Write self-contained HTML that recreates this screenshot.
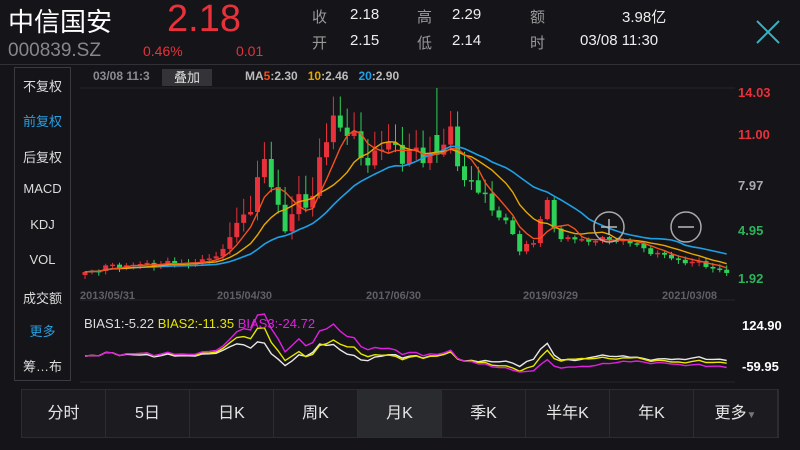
<!DOCTYPE html>
<html><head><meta charset="utf-8">
<style>
*{margin:0;padding:0;box-sizing:border-box}
body{width:800px;height:450px;background:#141419;overflow:hidden;position:relative;font-family:"Liberation Sans","Noto Sans CJK SC",sans-serif;color:#eee}
.a{position:absolute;white-space:nowrap}
.side{position:absolute;left:14px;top:67px;width:57px;height:314px;border:1px solid #3a3a40}
.side div{position:absolute;left:0;width:55px;text-align:center;font-size:13px;color:#ddd}
.tabs{position:absolute;left:21px;top:389px;width:758px;height:49px;display:flex;border:1px solid #2c2c31}
.tabs div{flex:1;border-right:1px solid #2c2c31;text-align:center;line-height:47px;font-size:16px;color:#e6e6e6;background:#1b1b20}
.tabs div.on{background:#2a2b2f}
.yl{position:absolute;left:738px;font-size:13px;font-weight:bold}
.dl{position:absolute;top:290px;font-size:11px;font-weight:bold;color:#5f6066}
</style></head><body>
<div class="a" style="left:8px;top:2px;font-size:26px;color:#fff">中信国安</div>
<div class="a" style="left:167px;top:-2px;font-size:38px;color:#e8313a">2.18</div>
<div class="a" style="left:8px;top:40px;font-size:19px;color:#86868c">000839.SZ</div>
<div class="a" style="left:143px;top:43px;font-size:14px;color:#e8313a">0.46%</div>
<div class="a" style="left:236px;top:43px;font-size:14px;color:#e8313a">0.01</div>
<div class="a" style="left:312px;top:6px;font-size:15px;color:#999">收</div>
<div class="a" style="left:312px;top:32px;font-size:15px;color:#999">开</div>
<div class="a" style="left:350px;top:6px;font-size:15px">2.18</div>
<div class="a" style="left:350px;top:32px;font-size:15px">2.15</div>
<div class="a" style="left:417px;top:6px;font-size:15px;color:#999">高</div>
<div class="a" style="left:417px;top:32px;font-size:15px;color:#999">低</div>
<div class="a" style="left:452px;top:6px;font-size:15px">2.29</div>
<div class="a" style="left:452px;top:32px;font-size:15px">2.14</div>
<div class="a" style="left:530px;top:6px;font-size:15px;color:#999">额</div>
<div class="a" style="left:530px;top:32px;font-size:15px;color:#999">时</div>
<div class="a" style="left:622px;top:6px;font-size:15px">3.98亿</div>
<div class="a" style="left:580px;top:32px;font-size:15px">03/08 11:30</div>
<svg class="a" style="left:755px;top:19px" width="26" height="26"><path d="M2 2L24 24M24 2L2 24" stroke="#3ab0c0" stroke-width="2"/></svg>
<div class="a" style="left:0;top:64px;width:800px;height:1px;background:#303036"></div>

<div class="side">
<div style="top:8px">不复权</div>
<div style="top:43px;color:#2a9fe0">前复权</div>
<div style="top:79px">后复权</div>
<div style="top:113px">MACD</div>
<div style="top:149px">KDJ</div>
<div style="top:184px">VOL</div>
<div style="top:220px">成交额</div>
<div style="top:253px;color:#2a9fe0">更多</div>
<div style="top:288px">筹…布</div>
</div>

<div class="a" style="left:93px;top:69px;font-size:12px;font-weight:bold;color:#8a8a90">03/08 11:3</div>
<div class="a" style="left:162px;top:69px;width:50px;height:17px;background:#343438;font-size:13px;text-align:center;line-height:17px;color:#ddd">叠加</div>
<div class="a" style="left:245px;top:69px;font-size:12px;font-weight:bold;color:#bbb">MA<span style="color:#f5501e">5</span>:2.30 &nbsp; <span style="color:#e0a800">10</span>:2.46 &nbsp; <span style="color:#1ea0e6">20</span>:2.90</div>

<div class="yl" style="top:85px;color:#e8313a">14.03</div>
<div class="yl" style="top:127px;color:#e8313a">11.00</div>
<div class="yl" style="top:178px;color:#aaa">7.97</div>
<div class="yl" style="top:223px;color:#2db35a">4.95</div>
<div class="yl" style="top:271px;color:#2db35a">1.92</div>
<div class="dl" style="left:80px">2013/05/31</div>
<div class="dl" style="left:217px">2015/04/30</div>
<div class="dl" style="left:366px">2017/06/30</div>
<div class="dl" style="left:523px">2019/03/29</div>
<div class="dl" style="left:662px">2021/03/08</div>

<svg id="ch" class="a" style="left:0;top:0" width="800" height="390"></svg>

<div class="a" style="left:84px;top:316px;font-size:13px;color:#ddd">BIAS1:-5.22 <span style="color:#e6e600">BIAS2:-11.35</span> <span style="color:#e020e0">BIAS3:-24.72</span></div>
<div class="a" style="left:742px;top:318px;font-size:13px;font-weight:bold;color:#fff">124.90</div>
<div class="a" style="left:742px;top:359px;font-size:13px;font-weight:bold;color:#fff">-59.95</div>

<div class="tabs">
<div>分时</div><div>5日</div><div>日K</div><div>周K</div><div class="on">月K</div><div>季K</div><div>半年K</div><div>年K</div><div>更多<span style="font-size:10px;color:#777">▼</span></div>
</div>

<script>
var kp=[[0,272],[4,266],[10,264],[17,262],[20,250],[23,215],[26,168],[27,180],[29,228],[31,205],[33,190],[36,118],[38,128],[40,160],[43,148],[46,150],[49,160],[51,148],[53,140],[54,160],[56,185],[60,215],[63,248],[65,240],[67,205],[69,238],[72,240],[78,240],[83,254],[86,260],[90,265],[93,273]];
function iy(i){for(var k=0;k<kp.length-1;k++){if(i>=kp[k][0]&&i<=kp[k+1][0]){var t=(i-kp[k][0])/(kp[k+1][0]-kp[k][0]);return kp[k][1]+t*(kp[k+1][1]-kp[k][1]);}}return 273;}
var N=94,C=[],s="";
for(var i=0;i<N;i++){var n=Math.sin(i*2.7)*Math.cos(i*1.3);var amp=(i>20&&i<60)?14:(i>60&&i<70?8:3);C.push(iy(i)+n*amp);}
function X(i){return 85+i*6.9;}
s+='<line x1="80" y1="88" x2="735" y2="88" stroke="#26262b"/><line x1="80" y1="300" x2="735" y2="300" stroke="#26262b"/><line x1="80" y1="382" x2="735" y2="382" stroke="#26262b"/>';
for(var i=0;i<N;i++){var o=i?C[i-1]:C[0]+3,c=C[i];var up=c<o;var col=up?"#e8313a":"#2ed158";var t=Math.min(o,c),b=Math.max(o,c);if(b-t<1.5)b=t+1.5;var w=Math.abs(Math.sin(i*3.1))*((i>20&&i<60)?18:5)+1;var wl=Math.abs(Math.cos(i*1.9))*((i>20&&i<60)?8:3)+1;var x=X(i);
if(i==51){t=Math.min(t,135);}
s+='<line x1="'+x+'" y1="'+(i==51?88:t-w)+'" x2="'+x+'" y2="'+(b+wl)+'" stroke="'+col+'" stroke-width="1"/>';
s+='<rect x="'+(x-2.5)+'" y="'+t+'" width="5" height="'+(b-t)+'" fill="'+col+'"/>';}
function P(y){return 1.92+(278-y)/186*12.11;}
function Y(p){return 278-(p-1.92)/12.11*186;}
function ma(n){var a=[];for(var i=0;i<N;i++){var sm=0,k=0;for(var j=Math.max(0,i-n+1);j<=i;j++){sm+=P(C[j]);k++;}a.push(sm/k);}return a;}
var m5=ma(5),m10=ma(10),m20=ma(20);
function line(a,f,col,w){var d="";for(var i=0;i<N;i++)d+=(i?"L":"M")+X(i).toFixed(1)+" "+f(a[i],i).toFixed(1);return '<path d="'+d+'" fill="none" stroke="'+col+'" stroke-width="'+w+'"/>';}
s+=line(m20,Y,"#1ea0e6",1.6)+line(m10,Y,"#e8a800",1.4)+line(m5,Y,"#f5501e",1.4);
var b6=ma(6),b12=ma(12),b24=ma(24);
function by(m){return function(v,i){var p=P(C[i]);var bb=(p-m[i])/m[i]*100;var y=356-bb*0.3;return Math.max(314,Math.min(372,y));};}
s+=line(b6,by(b6),"#e8e8e8",1.4)+line(b12,by(b12),"#e6e600",1.4)+line(b24,by(b24),"#e020e0",1.4);
s+='<circle cx="609" cy="227" r="15" fill="none" stroke="#aaa" stroke-width="1.5"/><path d="M601 227H617M609 219V235" stroke="#bbb" stroke-width="1.5"/>';
s+='<circle cx="686" cy="227" r="15" fill="none" stroke="#aaa" stroke-width="1.5"/><path d="M678 227H694" stroke="#bbb" stroke-width="1.5"/>';
document.getElementById("ch").innerHTML=s;
</script>
</body></html>
